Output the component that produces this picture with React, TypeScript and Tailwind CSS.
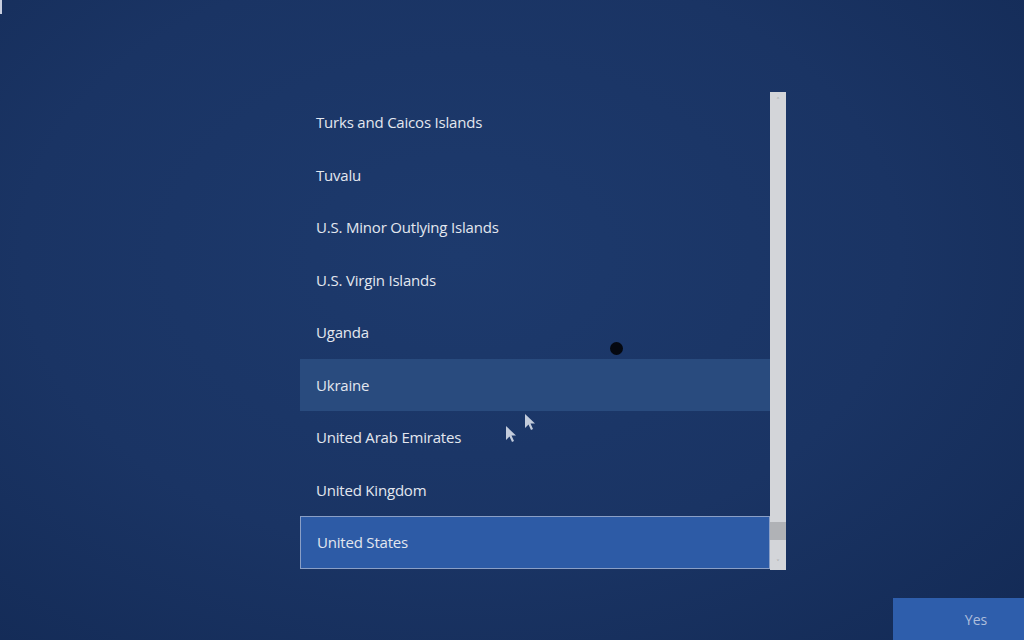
import React, { useState } from 'react';

const countries = [
  'Turks and Caicos Islands',
  'Tuvalu',
  'U.S. Minor Outlying Islands',
  'U.S. Virgin Islands',
  'Uganda',
  'Ukraine',
  'United Arab Emirates',
  'United Kingdom',
  'United States',
];

function Cursor({ className }: { className: string }) {
  return (
    <svg className={className} width="12" height="18" viewBox="0 0 12 18">
      <path d="M1 1 L1 15 L4.5 11.5 L7 17 L9 16 L6.5 10.5 L11 10.5 Z" fill="#c3ccdc" />
    </svg>
  );
}

function App() {
  const [selected, setSelected] = useState('United States');
  const hovered = 'Ukraine';

  return (
    <div
      className="relative flex h-[640px] w-[1024px] flex-col overflow-hidden bg-[radial-gradient(ellipse_at_45%_40%,#1d3a6d_0%,#1a3464_55%,#132a55_100%)]"
      style={{ fontFamily: '"Open Sans", "Noto Sans", sans-serif' }}
    >
      <div className="absolute left-0 top-0 h-[14px] w-[2px] bg-[#c8cede]" />

      <div className="ml-[300px] mt-[92px] flex h-[478px] w-[486px]">
        <div className="flex flex-1 flex-col pt-[4px]">
          {countries.map((c) => {
            const isSel = c === selected;
            const isHover = c === hovered;
            return (
              <div
                key={c}
                onClick={() => setSelected(c)}
                className={
                  'flex h-[52.5px] shrink-0 items-center pl-[16px] text-[15px] text-[#e3e7ef] ' +
                  (isSel
                    ? 'border border-[#8a9fc6] bg-[#2d5ba6]'
                    : isHover
                      ? 'bg-[#294b7e]'
                      : '')
                }
              >
                <span className="tracking-[-0.2px]">{c}</span>
              </div>
            );
          })}
        </div>
        <div className="flex w-[16px] flex-col bg-[#d3d5d9]">
          <div className="flex h-[16px] items-center justify-center text-[9px] leading-none text-[#9a9ca0]">˄</div>
          <div className="flex-1" />
          <div className="h-[18px] bg-[#b0b2b6]" />
          <div className="h-[14px]" />
          <div className="flex h-[16px] items-center justify-center text-[9px] leading-none text-[#9a9ca0]">˅</div>
        </div>
      </div>

      <div className="mt-auto flex justify-start pl-[893px]">
        <button className="h-[42px] w-[166px] shrink-0 bg-[#2e5eac] text-[14px] text-[#aebfdc]">Yes</button>
      </div>

      <div className="absolute left-[610px] top-[342px] h-[13px] w-[13px] rounded-full bg-[#050810]" />
      <Cursor className="absolute left-[505px] top-[425px]" />
      <Cursor className="absolute left-[524px] top-[413px]" />
    </div>
  );
}

export default App;
